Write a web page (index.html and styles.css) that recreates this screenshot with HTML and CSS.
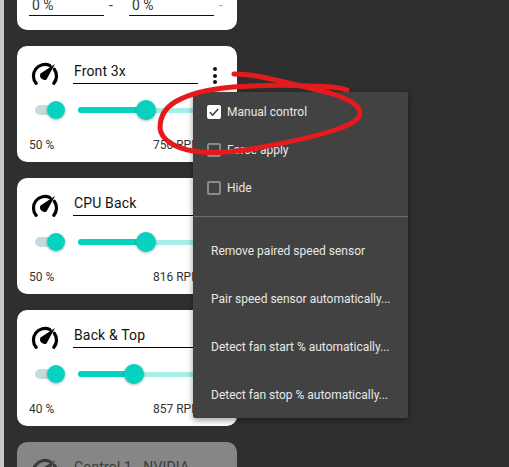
FILE: index.html
```html
<!DOCTYPE html>
<html lang="en">
<head>
<meta charset="utf-8">
<title>Fan Control</title>
<link rel="stylesheet" href="styles.css">
</head>
<body>
<div class="app">
  <div class="edge"></div>
  <main class="list">
    <section class="card card-top">
      <div class="range">
        <span class="range-field range-a">0 %</span>
        <span class="range-dash">-</span>
        <span class="range-field range-b">0 %</span>
        <span class="range-dash muted">-</span>
      </div>
    </section>

    <section class="card">
      <div class="head">
        <svg class="gauge" viewBox="0 0 28 24"><path class="gauge-arc" d="M5.2 21.4A11.5 11.5 0 0 1 19 3.6M23.3 7.2A11.5 11.5 0 0 1 22.8 21.4"/><path d="M24 2L9.5 11.5A4.5 4.5 0 0 0 15.5 17.5Z"/></svg>
        <div class="title">Front 3x</div>
        <div class="dots"><i></i><i></i><i></i></div>
      </div>
      <div class="controls">
        <div class="toggle"><span class="toggle-thumb"></span></div>
        <div class="slider"><span class="slider-fill" style="width:68px"></span><span class="slider-thumb"></span></div>
      </div>
      <div class="stats"><span class="stat-pct">50 %</span><span>750 RPM</span></div>
    </section>

    <section class="card">
      <div class="head">
        <svg class="gauge" viewBox="0 0 28 24"><path class="gauge-arc" d="M5.2 21.4A11.5 11.5 0 0 1 19 3.6M23.3 7.2A11.5 11.5 0 0 1 22.8 21.4"/><path d="M24 2L9.5 11.5A4.5 4.5 0 0 0 15.5 17.5Z"/></svg>
        <div class="title">CPU Back</div>
        <div class="dots"><i></i><i></i><i></i></div>
      </div>
      <div class="controls">
        <div class="toggle"><span class="toggle-thumb"></span></div>
        <div class="slider"><span class="slider-fill" style="width:68px"></span><span class="slider-thumb"></span></div>
      </div>
      <div class="stats"><span class="stat-pct">50 %</span><span>816 RPM</span></div>
    </section>

    <section class="card">
      <div class="head">
        <svg class="gauge" viewBox="0 0 28 24"><path class="gauge-arc" d="M5.2 21.4A11.5 11.5 0 0 1 19 3.6M23.3 7.2A11.5 11.5 0 0 1 22.8 21.4"/><path d="M24 2L9.5 11.5A4.5 4.5 0 0 0 15.5 17.5Z"/></svg>
        <div class="title">Back &amp; Top</div>
        <div class="dots"><i></i><i></i><i></i></div>
      </div>
      <div class="controls">
        <div class="toggle"><span class="toggle-thumb"></span></div>
        <div class="slider"><span class="slider-fill" style="width:56px"></span><span class="slider-thumb"></span></div>
      </div>
      <div class="stats"><span class="stat-pct">40 %</span><span>857 RPM</span></div>
    </section>

    <section class="card card-off">
      <div class="head">
        <svg class="gauge" viewBox="0 0 28 24"><path class="gauge-arc" d="M5.2 21.4A11.5 11.5 0 0 1 19 3.6M23.3 7.2A11.5 11.5 0 0 1 22.8 21.4"/><path d="M24 2L9.5 11.5A4.5 4.5 0 0 0 15.5 17.5Z"/></svg>
        <div class="title">Control 1 - NVIDIA</div>
      </div>
    </section>
  </main>

  <div class="menu">
    <div class="check-row">
      <span class="box box-on"><svg viewBox="0 0 14 14"><path d="M2.8 7.2L5.6 10L11.2 4"/></svg></span>
      <span>Manual control</span>
    </div>
    <div class="check-row"><span class="box"></span><span>Force apply</span></div>
    <div class="check-row"><span class="box"></span><span>Hide</span></div>
    <div class="divider"></div>
    <div class="menu-item">Remove paired speed sensor</div>
    <div class="menu-item">Pair speed sensor automatically...</div>
    <div class="menu-item">Detect fan start % automatically...</div>
    <div class="menu-item">Detect fan stop % automatically...</div>
  </div>

  <svg class="scribble" viewBox="0 0 509 467"><path d="M234 74C244 74 252 75 262 77C285 82 310 88 330 93C345 98 360 104 360 113C360 120 350 125 335 130C310 138 285 143 257 148C235 152 210 154 193 151C175 148 161 140 160 128C160 117 165 108 175 102C190 93 210 89 233 87C260 85 290 85 310 86C325 86 338 87 347 90"/></svg>
</div>
</body>
</html>
```

FILE: styles.css
```css
* { box-sizing: border-box; }

html, body {
  margin: 0;
  height: 100%;
  overflow: hidden;
}

body {
  background: #2f2f2f;
  font-family: Roboto, "Liberation Sans", sans-serif;
}

.app {
  position: relative;
  display: flex;
  width: 509px;
  height: 467px;
  overflow: hidden;
}

.edge {
  flex: none;
  width: 4px;
  background: #c9c9c9;
}

.list {
  display: flex;
  flex-direction: column;
  gap: 16px;
  width: 220px;
  margin-left: 13px;
  margin-top: -86px;
}

.card {
  flex: none;
  height: 116px;
  padding: 16px 12px 0;
  background: #fff;
  border-radius: 10px;
}

.range {
  display: flex;
  align-items: flex-start;
  padding: 68px 0 0;
  font-size: 14px;
  color: #333;
}

.range-field {
  display: block;
  flex: none;
  height: 18px;
  padding-left: 3px;
  line-height: 15px;
  border-bottom: 1px solid #111;
}

.range-a { width: 75px; }
.range-b { width: 85px; }

.range-dash {
  flex: none;
  width: 25px;
  padding-left: 5px;
  line-height: 15px;
}

.range-dash.muted {
  width: 11px;
  color: #aaa;
}

.head {
  display: flex;
  align-items: flex-start;
  height: 34px;
  padding-left: 2px;
}

.gauge {
  flex: none;
  width: 28px;
  height: 24px;
}

.gauge-arc {
  fill: none;
  stroke: #000;
  stroke-width: 3.2;
  stroke-linecap: round;
}

.title {
  flex: none;
  width: 125px;
  height: 22px;
  margin-left: 14px;
  padding-left: 1px;
  font-size: 14px;
  line-height: 19px;
  letter-spacing: 0.15px;
  color: #111;
  border-bottom: 1px solid #000;
}

.dots {
  display: flex;
  flex-direction: column;
  gap: 2.5px;
  margin-left: 15px;
  padding-top: 5px;
}

.dots i {
  display: block;
  width: 4px;
  height: 4px;
  border-radius: 50%;
  background: #111;
}

.controls {
  display: flex;
  align-items: center;
  height: 28px;
}

.toggle {
  position: relative;
  flex: none;
  width: 24px;
  height: 10px;
  margin-left: 6px;
  border-radius: 5px;
  background: #c4dbdb;
}

.toggle-thumb {
  position: absolute;
  top: -4px;
  right: -6px;
  width: 18px;
  height: 18px;
  border-radius: 50%;
  background: #07d2bf;
  box-shadow: 0 1px 3px rgba(0, 0, 0, 0.3);
}

.slider {
  display: flex;
  align-items: center;
  flex: none;
  width: 150px;
  height: 5px;
  margin-left: 19px;
  border-radius: 3px;
  background: #a5efe8;
}

.slider-fill {
  display: block;
  height: 6px;
  border-radius: 3px 0 0 3px;
  background: #07d2bf;
}

.slider-thumb {
  flex: none;
  width: 20px;
  height: 20px;
  margin-left: -10px;
  border-radius: 50%;
  background: #07d2bf;
  box-shadow: 0 1px 3px rgba(0, 0, 0, 0.3);
}

.stats {
  display: flex;
  margin-top: 14px;
  font-size: 12px;
  line-height: 14px;
  color: #333;
}

.stat-pct { width: 124px; }

.card-off { background: #868686; }
.card-off .title { color: #3b3b3b; }
.card-off .gauge path { fill: #3b3b3b; }
.card-off .gauge .gauge-arc { fill: none; stroke: #3b3b3b; }

.menu {
  position: absolute;
  left: 193px;
  top: 92px;
  width: 215px;
  height: 326px;
  padding-top: 1px;
  background: #424242;
  border-radius: 2px;
  box-shadow: 0 2px 6px rgba(0, 0, 0, 0.4);
  font-size: 12px;
  color: #e8e8e8;
}

.check-row {
  display: flex;
  align-items: center;
  gap: 6px;
  height: 38px;
  padding-left: 14px;
}

.box {
  flex: none;
  width: 14px;
  height: 14px;
  border: 2px solid #8a8a8a;
  border-radius: 2px;
}

.box-on {
  border: 0;
  background: #fff;
}

.box-on svg {
  display: block;
  width: 14px;
  height: 14px;
  fill: none;
  stroke: #444;
  stroke-width: 1.6;
}

.divider {
  height: 1px;
  margin: 9px 0 10px;
  background: #6e6e6e;
}

.menu-item {
  display: flex;
  align-items: center;
  height: 48px;
  padding-left: 18px;
}

.scribble {
  position: absolute;
  left: 0;
  top: 0;
  width: 509px;
  height: 467px;
  fill: none;
  stroke: #e41a1c;
  stroke-width: 5;
  stroke-linecap: round;
}
```
